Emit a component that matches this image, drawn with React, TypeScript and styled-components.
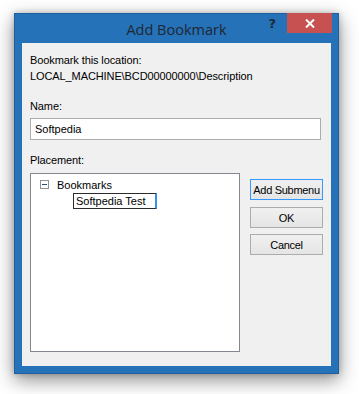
import React from 'react';
import styled, { createGlobalStyle } from 'styled-components';

const GlobalStyle = createGlobalStyle`
    html, body {
        margin: 0;
        padding: 0;
        background: #ffffff;
    }
    body {
        font-family: "Liberation Sans", Arial, sans-serif;
        font-size: 11px;
        color: #000;
    }
`;

const Stage = styled.div`
    padding: 13px 0 0 14px;
    width: 359px;
    height: 394px;
    box-sizing: border-box;
    overflow: hidden;
`;

const WindowFrame = styled.div`
    position: relative;
    width: 325px;
    height: 361px;
    box-sizing: border-box;
    background: #2672b8;
    border: 1px solid #1f5f9e;
    padding: 0 7px 7px 7px;
    box-shadow: 0 6px 18px rgba(0, 0, 0, 0.45), 0 0 6px rgba(0, 0, 0, 0.2);
    display: flex;
    flex-direction: column;
`;

const TitleBar = styled.div`
    position: relative;
    height: 29px;
    display: flex;
    align-items: flex-start;
    justify-content: center;
`;

const Title = styled.div`
    font-family: "Open Sans", "Noto Sans", sans-serif;
    font-size: 14.5px;
    color: #1e2733;
    line-height: 20px;
    margin-top: 6px;
`;

const Controls = styled.div`
    position: absolute;
    right: -1px;
    top: -1px;
    display: flex;
    align-items: flex-start;
`;

const HelpGlyph = styled.div`
    font-family: "DejaVu Sans", sans-serif;
    font-weight: bold;
    font-size: 13px;
    color: #1b2a3a;
    line-height: 14px;
    margin-top: 4px;
    margin-right: 11px;
`;

const CloseButton = styled.div`
    width: 45px;
    height: 20px;
    background: #c75050;
    display: flex;
    align-items: center;
    justify-content: center;
`;

const Client = styled.div`
    flex: 1;
    background: #f0f0f0;
    padding: 11px 8px 0 8px;
    overflow: hidden;
`;

const Label = styled.div<{ $gap?: number }>`
    line-height: 13px;
    margin-top: ${p => p.$gap ?? 0}px;
    white-space: nowrap;
    letter-spacing: -0.1px;
`;

const TextInput = styled.div`
    margin-top: 5px;
    width: 291px;
    height: 22px;
    box-sizing: border-box;
    background: #fff;
    border: 1px solid #abadb3;
    padding: 0 4px;
    line-height: 20px;
`;

const PlacementRow = styled.div`
    margin-top: 6px;
    display: flex;
    align-items: flex-start;
`;

const TreeBox = styled.div`
    width: 210px;
    height: 179px;
    box-sizing: border-box;
    background: #fff;
    border: 1px solid #828790;
    padding: 4px 0 0 9px;
`;

const TreeRow = styled.div`
    display: flex;
    align-items: center;
    height: 13px;
`;

const Expander = styled.div`
    width: 9px;
    height: 9px;
    box-sizing: border-box;
    border: 1px solid #919191;
    background: #fff;
    display: flex;
    align-items: center;
    justify-content: center;
    margin-right: 8px;
    &::after {
        content: '';
        width: 5px;
        height: 1px;
        background: #2a4f7c;
    }
`;

const RenameEdit = styled.div`
    margin: 2px 0 0 33px;
    width: 84px;
    height: 16px;
    box-sizing: border-box;
    border: 1px solid #2b2b2b;
    border-right: 2px solid #3d8ee6;
    background: #fff;
    padding-left: 2px;
    line-height: 14px;
    white-space: nowrap;
`;

const ButtonColumn = styled.div`
    margin-left: 10px;
    padding-top: 6px;
    display: flex;
    flex-direction: column;
    gap: 6px;
`;

const Button = styled.div<{ $focused?: boolean }>`
    width: 73px;
    height: 21px;
    box-sizing: border-box;
    border: 1px solid ${p => (p.$focused ? '#3399ff' : '#acacac')};
    background: linear-gradient(#f0f0f0, #e5e5e5);
    display: flex;
    align-items: center;
    justify-content: center;
    white-space: nowrap;
    letter-spacing: -0.3px;
    &:first-child {
        margin-bottom: 1px;
    }
`;

const App: React.FC = () => {
    return (
        <>
            <GlobalStyle />
            <Stage>
                <WindowFrame>
                    <TitleBar>
                        <Title>Add Bookmark</Title>
                        <Controls>
                            <HelpGlyph>?</HelpGlyph>
                            <CloseButton>
                                <svg width="10" height="9" viewBox="0 0 10 9">
                                    <path d="M1 0.5 L9 8.5 M9 0.5 L1 8.5" stroke="#fff" strokeWidth="2" />
                                </svg>
                            </CloseButton>
                        </Controls>
                    </TitleBar>
                    <Client>
                        <Label>Bookmark this location:</Label>
                        <Label $gap={3}>LOCAL_MACHINE\BCD00000000\Description</Label>
                        <Label $gap={17}>Name:</Label>
                        <TextInput>Softpedia</TextInput>
                        <Label $gap={14}>Placement:</Label>
                        <PlacementRow>
                            <TreeBox>
                                <TreeRow>
                                    <Expander />
                                    <span>Bookmarks</span>
                                </TreeRow>
                                <RenameEdit>Softpedia Test</RenameEdit>
                            </TreeBox>
                            <ButtonColumn>
                                <Button $focused>Add Submenu</Button>
                                <Button>OK</Button>
                                <Button>Cancel</Button>
                            </ButtonColumn>
                        </PlacementRow>
                    </Client>
                </WindowFrame>
            </Stage>
        </>
    );
};

export default App;
